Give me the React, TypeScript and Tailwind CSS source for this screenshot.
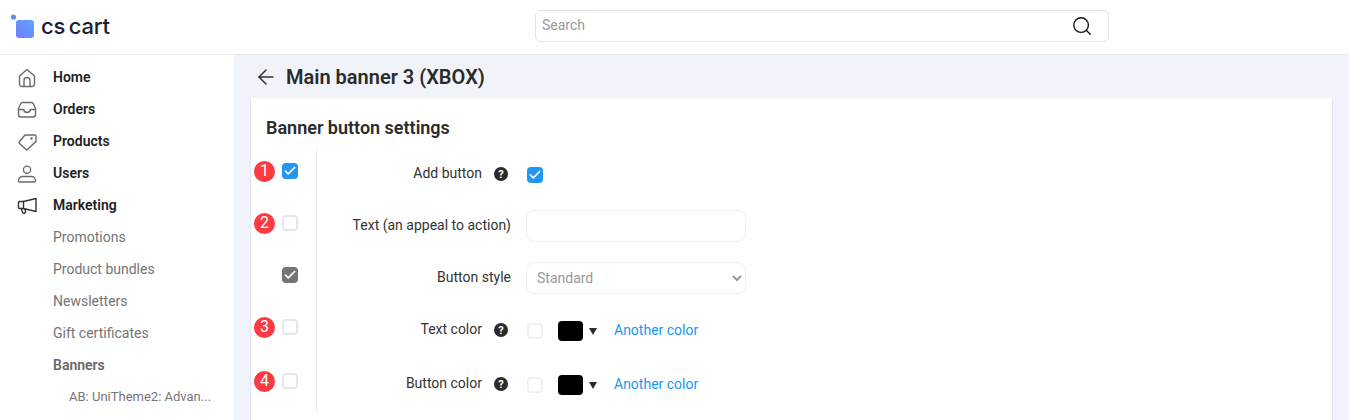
import { ArrowLeft, Check, Search } from "lucide-react";

const font = "font-['Roboto',sans-serif]";

/* 侧栏图标:24x24 线框 */
function NavIcon({ name }: { name: string }) {
  const dark = name === "Marketing";
  return (
    <svg
      width="24"
      height="24"
      viewBox="0 0 24 24"
      fill="none"
      strokeWidth="1.4"
      strokeLinecap="round"
      strokeLinejoin="round"
      className={dark ? "shrink-0 stroke-[#333]" : "shrink-0 stroke-[#6b6b6b]"}
    >
      {name === "Home" && (
        <>
          <path d="M4.5 11 12 4.5l7.5 6.5v8a2.5 2.5 0 0 1-2.5 2.5H7A2.5 2.5 0 0 1 4.5 19Z" />
          <path d="M9 21.5v-6a3 3 0 0 1 6 0v6" />
        </>
      )}
      {name === "Orders" && (
        <>
          <path d="M7.5 5.5h9a2 2 0 0 1 1.7 1l2.3 5v6a2.5 2.5 0 0 1-2.5 2.5H6a2.5 2.5 0 0 1-2.5-2.5v-6l2.3-5a2 2 0 0 1 1.7-1Z" />
          <path d="M3.5 12.5h5c.5 2 1.5 3 3.5 3s3-1 3.5-3h5" />
        </>
      )}
      {name === "Products" && (
        <>
          <path d="M10 6h10a1 1 0 0 1 1 1v5.5l-8.6 8.1a1 1 0 0 1-1.4 0l-6.6-6.4a1 1 0 0 1 0-1.4Z" />
          <circle cx="16.5" cy="9.5" r="0.6" />
        </>
      )}
      {name === "Users" && (
        <>
          <circle cx="12" cy="8.7" r="3.6" />
          <path d="M7.5 15.5h9a4 4 0 0 1 4 4v.5a1 1 0 0 1-1 1h-15a1 1 0 0 1-1-1v-.5a4 4 0 0 1 4-4Z" />
        </>
      )}
      {name === "Marketing" && (
        <>
          <path d="M21 5.5v13L8.5 15.5H4.5a1 1 0 0 1-1-1v-5a1 1 0 0 1 1-1h4Z" />
          <path d="M8.5 8.5v7" />
          <path d="m6.5 15.5.9 3.6a1.6 1.6 0 0 0 3.1-.8l-.5-2.4" />
        </>
      )}
    </svg>
  );
}

function Logo() {
  return (
    <div className="mb-[2px] flex items-center">
      <svg width="34" height="26" viewBox="0 0 34 26" className="ml-[10px] shrink-0">
        <defs>
          <linearGradient id="logo-grad" x1="0" y1="1" x2="1" y2="0">
            <stop offset="0" stopColor="#6b7dff" />
            <stop offset="1" stopColor="#63a4fb" />
          </linearGradient>
        </defs>
        <circle cx="3.5" cy="4" r="2.6" fill="#5f8df8" />
        <rect x="6" y="7" width="18" height="18" rx="3" fill="url(#logo-grad)" />
      </svg>
      <span className="ml-[-3px] font-['Inter',sans-serif] text-[22px] font-medium leading-none tracking-[-0.2px] text-[#1c2035] [word-spacing:-2px]">
        cs cart
      </span>
    </div>
  );
}

function Sidebar() {
  const main = ["Home", "Orders", "Products", "Users", "Marketing"];
  const sub = ["Promotions", "Product bundles", "Newsletters", "Gift certificates"];
  return (
    <aside className="flex w-[234px] shrink-0 flex-col bg-white pt-[6px] text-sm">
      {main.map((m) => (
        <div key={m} className="flex h-8 items-center pl-[15px]">
          <NavIcon name={m} />
          <span className="ml-[14px] font-semibold text-[#222]">{m}</span>
        </div>
      ))}
      {sub.map((s) => (
        <div key={s} className="flex h-8 items-center pl-[53px] text-[#757575]">
          {s}
        </div>
      ))}
      <div className="flex h-8 items-center pl-[53px] font-semibold text-[#666]">Banners</div>
      <div className="flex h-8 items-center pl-[69px] text-[13px] text-[#757575]">AB: UniTheme2: Advan...</div>
    </aside>
  );
}

function Box({ state }: { state: "on" | "off" | "gray" }) {
  if (state === "off") {
    return <span className="block h-4 w-4 rounded-[4px] border-2 border-[#e1e7f1] bg-white" />;
  }
  return (
    <span
      className={`flex h-4 w-4 items-center justify-center rounded-[4px] ${
        state === "on" ? "bg-[#2196f3]" : "bg-[#757575]"
      }`}
    >
      <Check size={14} strokeWidth={3} className="text-white" />
    </span>
  );
}

function Badge({ n }: { n: number }) {
  return (
    <span className="flex h-[21px] w-[21px] items-center justify-center rounded-full bg-[#fb3a42] text-base leading-none text-white">
      {n}
    </span>
  );
}

function Help() {
  return (
    <span className="flex h-[14px] w-[14px] items-center justify-center rounded-full bg-[#2b2b2b] text-[11px] font-bold leading-none text-white">
      ?
    </span>
  );
}

/* 左列:徽标 + 勾选框 */
function SideCheck({ n, state, className }: { n?: number; state: "on" | "off" | "gray"; className?: string }) {
  return (
    <div className={`flex h-8 items-center pl-[3px] ${className ?? ""}`}>
      <span className="w-[21px]">{n ? <Badge n={n} /> : null}</span>
      <span className="ml-[7px]">
        <Box state={state} />
      </span>
    </div>
  );
}

function Row({
  label,
  help,
  className,
  children,
}: {
  label: string;
  help?: boolean;
  className?: string;
  children: React.ReactNode;
}) {
  return (
    <div className={`flex h-8 items-center ${className ?? ""}`}>
      <div className="flex w-[194px] items-center justify-end text-sm text-[#333]">
        <span className="mb-[2px] whitespace-nowrap">{label}</span>
        {help && (
          <span className="ml-3 mr-[3px]">
            <Help />
          </span>
        )}
      </div>
      <div className="ml-[15px] flex items-center">{children}</div>
    </div>
  );
}

function ColorControl() {
  return (
    <>
      <span className="ml-px mt-[2px] block h-4 w-4 rounded-[4px] border-2 border-[#f0f1f3] bg-white" />
      <span className="ml-[15px] mt-[2px] block h-5 w-[25px] rounded-[4px] bg-black" />
      <span className="ml-[6px] mt-[2px] h-0 w-0 border-x-[4px] border-t-[7px] border-x-transparent border-t-[#2b2b2b]" />
      <span className="ml-[17px] text-sm text-[#2196f3]">Another color</span>
    </>
  );
}

export default function App() {
  return (
    <div className={`flex h-screen flex-col overflow-hidden bg-white ${font}`}>
      {/* 顶栏 */}
      <header className="flex h-[55px] shrink-0 items-center border-b border-[#e3e8f1] bg-white">
        <div className="w-[535px] shrink-0">
          <Logo />
        </div>
        <div className="mb-[2px] flex h-8 w-[574px] items-center justify-between rounded-[6px] border border-[#dfe3f0] pl-[6px] pr-[15px]">
          <span className="mb-[2px] text-sm text-[#9a9a9a]">Search</span>
          <Search size={22} strokeWidth={1.5} className="text-[#111]" />
        </div>
      </header>

      <div className="flex min-h-0 flex-1">
        <Sidebar />
        <main className="flex min-w-0 flex-1 flex-col bg-[#f0f4fa] pl-4 pr-4">
          <div className="flex h-[43px] shrink-0 items-center">
            <ArrowLeft size={24} strokeWidth={1.5} className="ml-[4px] text-[#333]" />
            <h1 className="ml-[8px] text-xl font-semibold text-[#2b2b2b]">Main banner 3 (XBOX)</h1>
          </div>
          <section className="flex-1 border-x border-[#e0e6f3] bg-white">
            <h2 className="pl-[15px] pt-[18px] text-lg font-semibold leading-6 text-[#2b2b2b]">
              Banner button settings
            </h2>
            <div className="mt-[9px] flex">
              <div className="h-[263px] w-[66px] shrink-0 border-r border-[#e8ebf1] pt-[6px]">
                <SideCheck n={1} state="on" className="mb-5" />
                <SideCheck n={2} state="off" className="mb-5" />
                <SideCheck state="gray" className="mb-5" />
                <SideCheck n={3} state="off" className="mb-[22px]" />
                <SideCheck n={4} state="off" />
              </div>
              <div className="pt-[9px]">
                <Row label="Add button" help className="mb-5">
                  <span className="ml-px mt-[2px]">
                    <Box state="on" />
                  </span>
                </Row>
                <Row label="Text (an appeal to action)" className="mb-5">
                  <input className="h-8 w-[220px] rounded-[8px] border border-[#f0f1f3] bg-white" />
                </Row>
                <Row label="Button style" className="mb-5">
                  <select
                    disabled
                    className="h-8 w-[220px] rounded-[8px] border border-[#f0f1f3] bg-white px-[6px] text-sm text-[#999]"
                  >
                    <option>Standard</option>
                  </select>
                </Row>
                <Row label="Text color" help className="mb-[22px]">
                  <ColorControl />
                </Row>
                <Row label="Button color" help>
                  <ColorControl />
                </Row>
              </div>
            </div>
          </section>
        </main>
      </div>
    </div>
  );
}
